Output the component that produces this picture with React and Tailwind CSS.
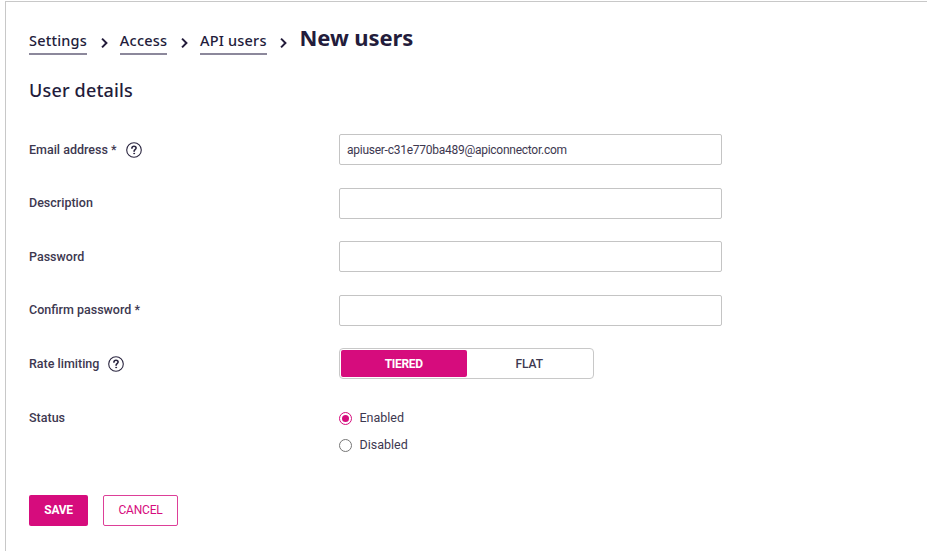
import { useState } from "react";

const breadcrumbs = ["Settings", "Access", "API users"];

const HelpIcon = () => (
  <svg
    viewBox="0 0 16 16"
    className="h-4 w-4 shrink-0"
    fill="none"
    stroke="#2b2640"
    strokeLinecap="round"
  >
    <circle cx="8" cy="8" r="7.3" strokeWidth="1.1" />
    <path d="M5.9 6.1C6 4.9 6.9 4.3 8 4.3c1.2 0 2.1.7 2.1 1.8 0 1.5-2 1.6-2 3.1" strokeWidth="1.6" />
    <circle cx="8.1" cy="11.5" r="0.5" fill="#2b2640" strokeWidth="0.8" />
  </svg>
);

const Chevron = () => (
  <svg viewBox="0 0 8 12" className="ml-[13.5px] mr-[12.3px] mt-[11.5px] h-3 w-[7px] shrink-0" fill="none" stroke="#231c3b" strokeWidth="2.3">
    <path d="M1.2 1L6.2 6l-5 5" />
  </svg>
);

const FormRow = ({ label, help, children }) => (
  <div className="flex h-[53.6px] items-start">
    <div className="flex h-[32px] w-[310px] shrink-0 items-center gap-[9px] text-[12.5px] font-medium">
      <span>{label}</span>
      {help && <HelpIcon />}
    </div>
    {children}
  </div>
);

const TextField = ({ value, onChange, type = "text" }) => (
  <input
    type={type}
    value={value}
    onChange={(e) => onChange(e.target.value)}
    className="h-[31px] w-[383px] rounded-[2px] border border-[#c4c4c4] bg-white px-[7px] text-[12px] tracking-[-0.26px] outline-none"
  />
);

const RadioOption = ({ label, checked, onSelect }) => (
  <button type="button" role="radio" aria-checked={checked} onClick={onSelect} className="flex h-[27px] items-center gap-[7.5px]">
    <span
      className={`flex h-[13px] w-[13px] items-center justify-center rounded-full border bg-white ${
        checked ? "border-[#d60c7d]" : "border-[#767676]"
      }`}
    >
      {checked && <span className="h-[7px] w-[7px] rounded-full bg-[#d60c7d]" />}
    </span>
    <span className="text-[12.5px]">{label}</span>
  </button>
);

const App = () => {
  const [email, setEmail] = useState("apiuser-c31e770ba489@apiconnector.com");
  const [description, setDescription] = useState("");
  const [password, setPassword] = useState("");
  const [confirmPassword, setConfirmPassword] = useState("");
  const [rateLimit, setRateLimit] = useState("tiered");
  const [status, setStatus] = useState("enabled");

  return (
    <div className="h-[553px] overflow-hidden bg-white pl-[5px] pr-[3px] pt-px font-['Roboto',sans-serif] text-[#3d3850]">
      <div className="h-[550px] border-l border-t border-[#c8c8c8] pl-[23px]">
        {/* Breadcrumb */}
        <nav className="flex h-[69px] items-start pt-[23px] font-['Noto_Sans',sans-serif] text-[#231c3b]">
          {breadcrumbs.map((crumb) => (
            <div key={crumb} className="flex items-start">
              <a
                href="#"
                className="mt-[5px] h-[25px] whitespace-nowrap border-b-2 border-[#8c889b] text-[14.5px] font-medium leading-[21px] tracking-[0.2px]"
              >
                {crumb}
              </a>
              <Chevron />
            </div>
          ))}
          <h1 className="-mt-px text-[22px] font-bold leading-[26px] tracking-[-0.1px]">New users</h1>
        </nav>

        <h2 className="h-[63px] pt-[7px] font-['Noto_Sans',sans-serif] text-[18px] font-medium leading-6 tracking-[0.18px] text-[#231c3b]">
          User details
        </h2>

        {/* Form */}
        <FormRow label="Email address *" help>
          <TextField value={email} onChange={setEmail} />
        </FormRow>
        <FormRow label="Description">
          <TextField value={description} onChange={setDescription} />
        </FormRow>
        <FormRow label="Password">
          <TextField type="password" value={password} onChange={setPassword} />
        </FormRow>
        <FormRow label="Confirm password *">
          <TextField type="password" value={confirmPassword} onChange={setConfirmPassword} />
        </FormRow>
        <FormRow label="Rate limiting" help>
          <div className="flex h-[31px] w-[255px] rounded-[4px] border border-[#c8c8c8] p-px text-[12px]">
            {["tiered", "flat"].map((option) => (
              <button
                key={option}
                type="button"
                onClick={() => setRateLimit(option)}
                className={`flex-1 rounded-[2px] uppercase ${
                  rateLimit === option ? "bg-[#d60c7d] font-bold tracking-[-0.3px] text-white" : "font-medium tracking-[-0.1px]"
                }`}
              >
                {option}
              </button>
            ))}
          </div>
        </FormRow>
        <FormRow label="Status">
          <div role="radiogroup" className="pt-[3px]">
            <RadioOption label="Enabled" checked={status === "enabled"} onSelect={() => setStatus("enabled")} />
            <RadioOption label="Disabled" checked={status === "disabled"} onSelect={() => setStatus("disabled")} />
          </div>
        </FormRow>

        {/* Actions */}
        <div className="mt-[39px] flex gap-[15px] text-[12px]">
          <button type="button" className="h-[31px] w-[59px] rounded-[2px] bg-[#d60c7d] font-bold tracking-[-0.3px] text-white">
            SAVE
          </button>
          <button
            type="button"
            className="h-[31px] w-[75px] rounded-[2px] border border-[#dd3f98] tracking-[-0.2px] text-[#d60c7d]"
          >
            CANCEL
          </button>
        </div>
      </div>
    </div>
  );
};

export default App;
